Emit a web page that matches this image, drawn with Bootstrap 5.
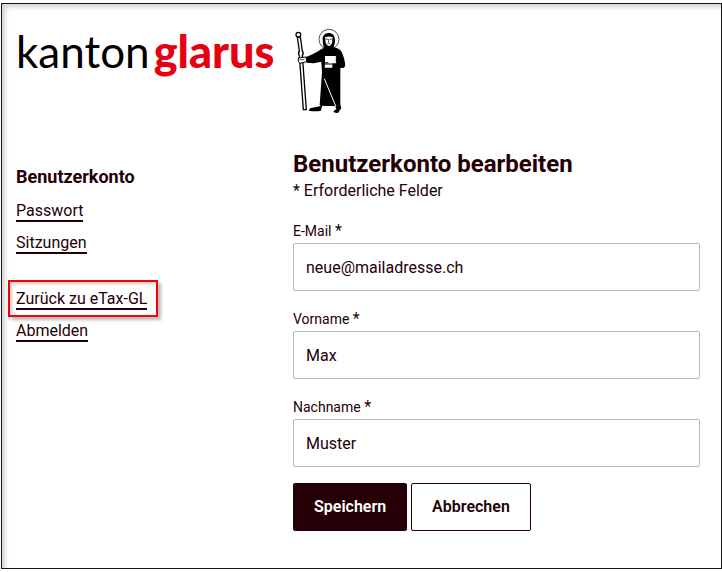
<!DOCTYPE html>
<html lang="de">
<head>
<meta charset="utf-8">
<meta name="viewport" content="width=device-width, initial-scale=1">
<title>Benutzerkonto bearbeiten</title>
<link href="https://cdn.jsdelivr.net/npm/bootstrap@5.3.0/dist/css/bootstrap.min.css" rel="stylesheet">
<style>
  :root { --ink: #240006; }
  body { font-family: Roboto, sans-serif; font-size: 16px; line-height: 24px; color: var(--ink); background: #fff; }
  .account-frame { margin: 3px 0 0 1px; padding: 23px 21px 37px 14px; border: 1px solid #15151a; box-shadow: inset 5px 5px 5px -2px #d0d0d0, 3px 3px 2px #d0d0d0; }
  .brand { color: #000; }
  .brand-name { flex: 0 0 279px; font-family: Lato, sans-serif; font-size: 44px; line-height: 48px; }
  .brand-name strong { color: #e60012; font-weight: 900; font-size: 45px; margin-left: 4px; }
  .account-columns { padding-top: 36px; }
  .account-nav { flex: 0 0 277px; padding-top: 15px; }
  .nav-title { font-size: 18px; line-height: 24px; font-weight: 700; margin-bottom: 10px; }
  .link-group { margin-bottom: 32px; }
  .account-nav a { color: var(--ink); border-bottom: 2px solid var(--ink); }
  .marked-item::after { content: ""; position: absolute; inset: -7px -11px -6px -8px; border: 2px solid #f00505; box-shadow: 3px 3px 3px #bbb, inset 2px 2px 3px #ccc; pointer-events: none; }
  h1 { font-size: 24px; line-height: 28px; font-weight: 700; margin-bottom: 1px; }
  .field-label { font-size: 14px; }
  .field-label span { font-size: 16px; }
  .field-input { height: 48px; padding: 0 12px; border: 1px solid #b9b9b9; border-radius: 2px; color: var(--ink); font-size: 16px; }
  .action { height: 48px; padding: 0 20px; border: 1px solid var(--ink); border-radius: 2px; font-weight: 600; color: var(--ink); }
  .action-save { background: var(--ink); color: #fff; }
</style>
</head>
<body>
<div class="account-frame">
  <header class="brand d-flex align-items-start">
    <div class="brand-name text-nowrap">kanton<strong>glarus</strong></div>
    <svg width="52" height="87" viewBox="30 15 156 261" role="img" aria-label="Wappenfigur">
      <circle cx="132" cy="52" r="30" fill="#fff" stroke="#000" stroke-width="2"/>
      <path d="M131 33C119 33 112 42 113 53Q113 68 117 77L106 83C92 92 76 101 62 105L65 122 86 124 109 119 111 150 104 250 117 252 152 252 166 250 166 138 177 137Q182 132 180 122C177 106 172 92 166 84Q158 78 146 76 150 66 150 53C149 41 143 33 131 33Z"/>
      <path d="M120 46q11-5 23 0l-2 17q-3 9-9 9-8-2-10-10z" fill="#fff"/>
      <path d="M121 51l8 1m5 0l8-1M131 51v11m-4 3q5-3 9 0" fill="none" stroke="#000" stroke-width="2"/>
      <path d="M120 102h34v22h-12v13h-23l1-13h10v-3h-10z" fill="#fff"/>
      <path d="M154 102v20m-34 4h22" stroke="#000" stroke-width="3"/>
      <path d="M118 170l34 82" stroke="#fff" stroke-width="3"/>
      <path d="M105 247l2 5-32 7-4 7q19 3 37 0l4-16zM151 252l3 9-9 7q2 6 14 5 5-8 10-14l-3-11z"/>
      <path d="M37 45l6 42q-5 7 0 14l12 162h9L52 101q5-8 0-14l-6-42z" fill="#fff" stroke="#000" stroke-width="4"/>
      <circle cx="40" cy="38" r="7" fill="#fff" stroke="#000" stroke-width="4"/>
      <path d="M40 108l23-3 2 14-20 5-5-6z" fill="#fff" stroke="#000" stroke-width="3"/>
      <path d="M44 113h14" stroke="#000" stroke-width="2"/>
    </svg>
  </header>
  <div class="account-columns d-flex">
    <nav class="account-nav" aria-label="Benutzerkonto">
      <h2 class="nav-title">Benutzerkonto</h2>
      <ul class="link-group list-unstyled d-flex flex-column gap-2">
        <li><a class="text-decoration-none" href="#passwort">Passwort</a></li>
        <li><a class="text-decoration-none" href="#sitzungen">Sitzungen</a></li>
      </ul>
      <ul class="list-unstyled d-flex flex-column align-items-start gap-2 mb-0">
        <li class="marked-item position-relative"><a class="text-decoration-none" href="#etax">Zurück zu eTax-GL</a></li>
        <li><a class="text-decoration-none" href="#abmelden">Abmelden</a></li>
      </ul>
    </nav>
    <main class="flex-grow-1">
      <h1>Benutzerkonto bearbeiten</h1>
      <p class="mb-3">* Erforderliche Felder</p>
      <form>
        <div class="mb-3">
          <label class="field-label d-block" for="email">E-Mail <span>*</span></label>
          <input class="field-input form-control" id="email" type="email" value="neue@mailadresse.ch" required>
        </div>
        <div class="mb-3">
          <label class="field-label d-block" for="vorname">Vorname <span>*</span></label>
          <input class="field-input form-control" id="vorname" type="text" value="Max" required>
        </div>
        <div class="mb-3">
          <label class="field-label d-block" for="nachname">Nachname <span>*</span></label>
          <input class="field-input form-control" id="nachname" type="text" value="Muster" required>
        </div>
        <div class="d-flex gap-1">
          <button class="action action-save" type="submit">Speichern</button>
          <button class="action bg-white" type="button">Abbrechen</button>
        </div>
      </form>
    </main>
  </div>
</div>
<script src="https://cdn.jsdelivr.net/npm/bootstrap@5.3.0/dist/js/bootstrap.bundle.min.js"></script>
</body>
</html>
